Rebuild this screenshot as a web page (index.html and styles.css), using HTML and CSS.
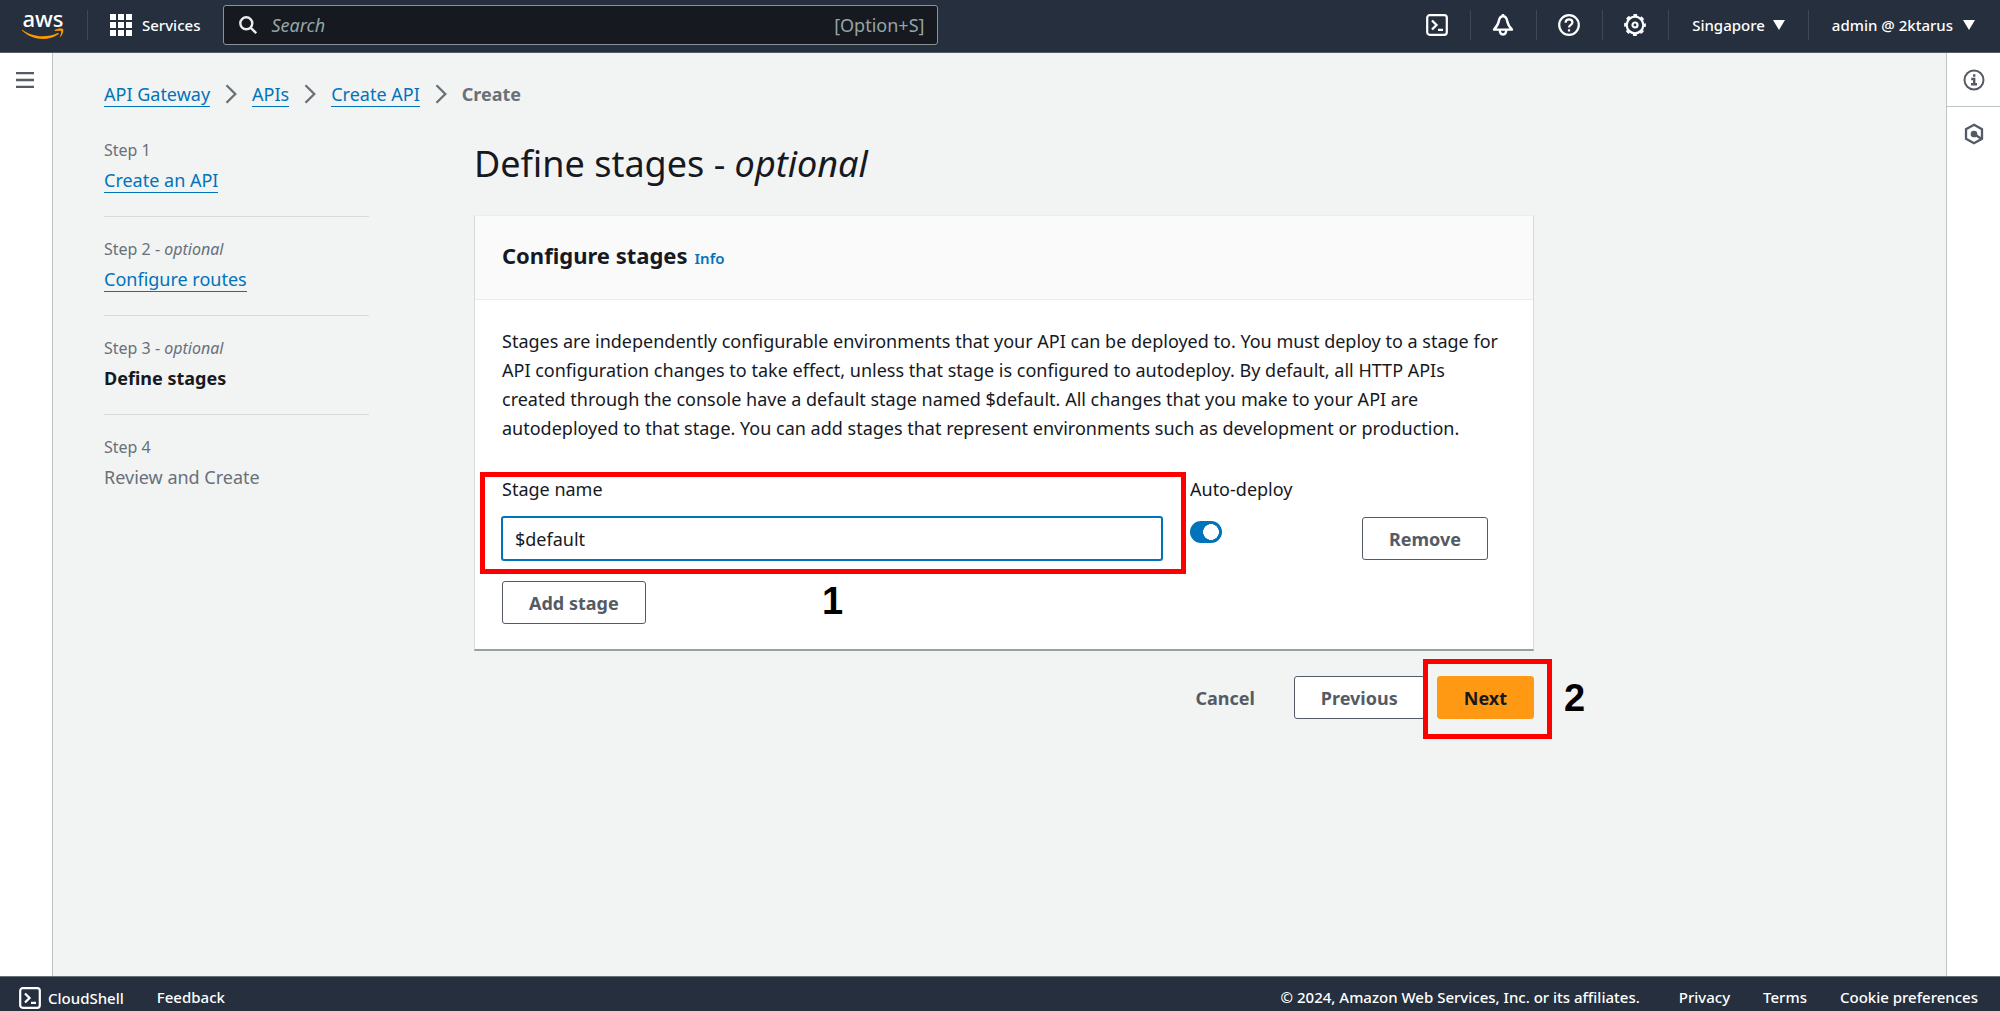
FILE: index.html
```html
<!DOCTYPE html>
<html lang="en">
<head>
<meta charset="utf-8">
<meta name="viewport" content="width=device-width, initial-scale=1">
<title>API Gateway - Define stages</title>
<link rel="stylesheet" href="styles.css">
</head>
<body>
<svg class="sprite" aria-hidden="true">
  <symbol id="shell" viewBox="0 0 22 22"><rect x="1.2" y="1.2" width="19.6" height="19.6" rx="2.5" fill="none" stroke="currentColor" stroke-width="2.2"/><path d="M6 6.5l4.5 4.5L6 15.5M12 15.8h5" fill="none" stroke="currentColor" stroke-width="2.3"/></symbol>
  <symbol id="chevron" viewBox="0 0 12 20"><path d="M1.5 1.2L10.3 10l-8.8 8.8" fill="none" stroke="currentColor" stroke-width="2.3"/></symbol>
</svg>
<header class="topbar">
  <a class="logo" href="#" aria-label="AWS home">
    <span class="logo-text">aws</span>
    <svg class="logo-smile" viewBox="0 0 42 12" aria-hidden="true"><path d="M.3 1.8C6 6 13 8.3 20.500 8.3c5.200 0 10.900-1.200 15.200-3.300.9-.4 1.600.6.7 1.300C32.500 9.300 26.500 11 20.800 11 13 11 5.800 8 .2 2.800c-.5-.5-.3-1.200.1-1zM32.500 2.400C35 .6 39 .2 41 1c1 .8-.2 5.800-2.600 8-.5.400-.8.200-.6-.3.700-1.600 1.900-4.700 1.300-5.500-.5-.7-3.900-.4-5.900-.200-.6.1-.7-.300-.700-.6z" fill="#ff9900"/></svg>
  </a>
  <button class="services" type="button">
    <svg width="22" height="22" viewBox="0 0 22 22" fill="currentColor" aria-hidden="true"><path d="M0 0h6v6H0zM8 0h6v6H8zM16 0h6v6h-6zM0 8h6v6H0zM8 8h6v6H8zM16 8h6v6h-6zM0 16h6v6H0zM8 16h6v6H8zM16 16h6v6h-6z"/></svg>
    Services
  </button>
  <label class="search">
    <svg width="18" height="18" viewBox="0 0 18 18" fill="none" stroke="#eaeded" stroke-width="2.4" aria-hidden="true"><circle cx="7.300" cy="7.300" r="6"/><path d="M11.600 11.600l5.600 5.600"/></svg>
    <input type="search" placeholder="Search" aria-label="Search">
    <span class="shortcut">[Option+S]</span>
  </label>
  <nav class="tools" aria-label="Account">
    <button type="button" class="tool" aria-label="CloudShell"><svg class="icon"><use href="#shell"/></svg></button>
    <button type="button" class="tool" aria-label="Notifications"><svg class="icon" viewBox="0 0 22 22" fill="none" stroke="currentColor" stroke-width="2.400" stroke-linejoin="round"><path d="M11 2.200C8.600 2.200 7.300 4.200 6.900 6.800 6.300 10.600 4.900 12.500 2 15.600h18c-2.900-3.100-4.300-5-4.900-8.800-.4-2.600-1.700-4.600-4.100-4.600zM11 0v2M7.800 16c0 2.700 1.200 4.500 3.200 4.500s3.200-1.800 3.200-4.500"/></svg></button>
    <button type="button" class="tool" aria-label="Help"><svg class="icon" viewBox="0 0 22 22" fill="none" stroke="currentColor" stroke-width="2.200"><circle cx="11" cy="11" r="9.800"/><path d="M7.600 8.700C7.700 6.600 9 5.400 11 5.400s3.400 1.200 3.400 3c0 2.400-3.400 2.500-3.400 5.100M11 15.300v2.300"/></svg></button>
    <button type="button" class="tool" aria-label="Settings"><svg class="icon" viewBox="0 0 22 22" fill="none" stroke="currentColor"><circle cx="11" cy="11" r="8.300" stroke-width="2.200"/><circle cx="11" cy="11" r="9.900" stroke-width="2" stroke-dasharray="3.900 3.875" stroke-dashoffset="1.950"/><circle cx="11" cy="11" r="2.500" stroke-width="2.200"/></svg></button>
    <button type="button" class="tool menu">Singapore <span class="caret"></span></button>
    <button type="button" class="tool menu account">admin @ 2ktarus <span class="caret"></span></button>
  </nav>
</header>

<div class="shell">
  <aside class="rail rail-left">
    <button type="button" aria-label="Open navigation"><svg width="18" height="16" viewBox="0 0 18 16" aria-hidden="true"><path d="M0 1.200h18M0 8h18M0 14.800h18" stroke="currentColor" stroke-width="2.300"/></svg></button>
  </aside>

  <main class="content">
    <nav class="crumbs" aria-label="Breadcrumbs">
      <a href="#">API Gateway</a><svg><use href="#chevron"/></svg>
      <a href="#">APIs</a><svg><use href="#chevron"/></svg>
      <a href="#">Create API</a><svg><use href="#chevron"/></svg>
      <b>Create</b>
    </nav>
    <div class="wizard">
      <ol class="steps">
        <li><small>Step 1</small><a href="#">Create an API</a></li>
        <li><small>Step 2 - <i>optional</i></small><a href="#">Configure routes</a></li>
        <li><small>Step 3 - <i>optional</i></small><b>Define stages</b></li>
        <li><small>Step 4</small><span>Review and Create</span></li>
      </ol>
      <form class="stage-form">
        <h1>Define stages - <i>optional</i></h1>
        <section class="card">
          <div class="card-head"><h2>Configure stages</h2><a href="#">Info</a></div>
          <div class="card-body">
            <p>Stages are independently configurable environments that your API can be deployed to. You must deploy to a stage for<br>API configuration changes to take effect, unless that stage is configured to autodeploy. By default, all HTTP APIs<br>created through the console have a default stage named $default. All changes that you make to your API are<br>autodeployed to that stage. You can add stages that represent environments such as development or production.</p>
            <div class="stage-row">
              <div class="field marked">
                <label for="stage">Stage name</label>
                <input id="stage" class="text-input" type="text" value="$default">
                <span class="mark-number below">1</span>
              </div>
              <div class="field">
                <label for="auto">Auto-deploy</label>
                <input id="auto" class="toggle" type="checkbox" role="switch" checked>
              </div>
              <button type="button" class="btn remove">Remove</button>
            </div>
            <button type="button" class="btn">Add stage</button>
          </div>
        </section>
        <div class="actions">
          <button type="button" class="btn plain">Cancel</button>
          <button type="button" class="btn">Previous</button>
          <div class="next marked">
            <button type="button" class="btn primary">Next</button>
            <span class="mark-number beside">2</span>
          </div>
        </div>
      </form>
    </div>
  </main>

  <aside class="rail rail-right">
    <button type="button" aria-label="Info"><svg class="icon" viewBox="0 0 22 22" fill="none" stroke="currentColor" stroke-width="2"><circle cx="11" cy="11" r="9.500"/><path d="M8.200 10h3v5M8 15.200h6M10 6.500h2.400" stroke-width="2.400"/></svg></button>
    <button type="button" aria-label="Diagnostics"><svg class="icon" viewBox="0 0 22 22" fill="none" stroke="currentColor" stroke-width="2.300"><path d="M11 1.800l8 4.400v9.600l-8 4.400-8-4.400V6.200z"/><path d="M11 11l7 4.500"/><circle cx="11" cy="11" r="2.200" fill="currentColor"/></svg></button>
  </aside>
</div>

<footer class="footer">
  <a class="cloudshell" href="#"><svg class="icon"><use href="#shell"/></svg>CloudShell</a>
  <a href="#">Feedback</a>
  <span class="copyright">© 2024, Amazon Web Services, Inc. or its affiliates.</span>
  <a href="#">Privacy</a>
  <a href="#">Terms</a>
  <a href="#">Cookie preferences</a>
</footer>
</body>
</html>
```
FILE: styles.css
```css
* { box-sizing: border-box; }

body {
  margin: 0;
  min-height: 100vh;
  display: flex;
  flex-direction: column;
  background: #f2f3f3;
  color: #16191f;
  font: 18px/29px "Noto Sans", "Open Sans", sans-serif;
}

button, input { font: inherit; color: inherit; }
button { cursor: pointer; }
a { color: #0073bb; text-decoration: none; }
.sprite { display: none; }
.icon { display: block; width: 22px; height: 22px; }

/* Top bar */
.topbar {
  display: flex;
  align-items: center;
  height: 53px;
  padding-bottom: 3px;
  background: #252f3e;
  border-bottom: 1px solid #545b64;
  color: #fff;
  font-size: 15px;
  font-weight: 500;
  line-height: 20px;
}
.logo { width: 87px; padding-left: 22px; color: #fff; }
.logo-text { display: block; width: 42px; text-align: center; font: 500 22px/17px "Noto Sans", sans-serif; }
.logo-smile { display: block; width: 42px; height: 12px; margin-top: 1px; }
.services {
  display: flex;
  align-items: center;
  gap: 10px;
  height: 30px;
  padding: 0 23px 0 22px;
  border: 0;
  border-left: 1px solid #414750;
  background: none;
}
.search {
  display: flex;
  align-items: center;
  flex: 0 1 715px;
  height: 40px;
  padding: 0 13px 0 15px;
  border: 1px solid #879596;
  border-radius: 3px;
  background: #16191f;
  font-size: 18px;
  font-weight: 400;
}
.search input {
  flex: 1;
  min-width: 0;
  padding: 0 14px;
  border: 0;
  outline: 0;
  background: none;
}
.search input::placeholder { color: #95a5a6; font-style: italic; opacity: 1; }
.shortcut { color: #95a5a6; }
.tools { display: flex; margin-left: auto; }
.tool {
  display: flex;
  align-items: center;
  gap: 8px;
  height: 30px;
  padding: 0 22px 0 21px;
  border: 0;
  border-left: 1px solid #414750;
  background: none;
}
.tool:first-child { border-left: 0; }
.menu { padding: 0 23px; }
.account { gap: 10px; padding-right: 25px; }
.caret { border: 6px solid transparent; border-top: 10px solid #fff; border-bottom: 0; }

/* Page frame */
.shell { flex: 1; display: flex; }
.rail { flex: none; background: #fff; color: #545b64; }
.rail button { display: flex; align-items: center; justify-content: center; width: 100%; height: 53px; padding: 0; border: 0; background: none; }
.rail-left { width: 53px; border-right: 1px solid #bcc4c8; }
.rail-left button { padding-right: 2px; }
.rail-right { width: 54px; border-left: 1px solid #bcc4c8; }
.rail-right button:first-child { height: 54px; border-bottom: 1px solid #bcc4c8; }
.content { flex: 1; min-width: 0; padding: 26px 51px; }

.crumbs { display: flex; align-items: center; height: 30px; line-height: 24px; }
.crumbs a { border-bottom: 1px solid #0073bb; }
.crumbs b { color: #687078; }
.crumbs svg { width: 12px; height: 20px; margin: 0 15px; color: #687078; }

.wizard {
  display: grid;
  grid-template-columns: 1fr 4fr;
  gap: 105px;
  max-width: 1430px;
}

/* Step list */
.steps { margin: 0; padding: 29px 0 0; list-style: none; color: #687078; }
.steps li { height: 79px; border-bottom: 1px solid #d5dbdb; margin-bottom: 20px; }
.steps li:last-child { border: 0; }
.steps small { display: block; font-size: 16px; line-height: 24px; margin-bottom: 4px; }
.steps a, .steps b, .steps span { display: inline-block; line-height: 24px; }
.steps a { border-bottom: 1px solid #0073bb; }
.steps b { color: #16191f; }

/* Stage form */
h1 { margin: 32px 0 28px; font-size: 36px; line-height: 46px; font-weight: 400; }
.card {
  background: #fff;
  border: 1px solid #d5dbdb;
  border-top-color: #eaeded;
  border-bottom: 2px solid #95a0a3;
}
.card-head {
  display: flex;
  align-items: baseline;
  gap: 7px;
  height: 84px;
  padding: 23px 27px;
  border-bottom: 1px solid #eaeded;
  background: #fafafa;
}
.card-head a { font-size: 15px; font-weight: 600; }
h2 { margin: 0; font-size: 22px; line-height: 32px; }
.card-body { padding: 27px 27px 25px; }
p { margin: 0 0 32px; white-space: nowrap; }
.stage-row { display: grid; grid-template-columns: 660fr 144fr 144fr; gap: 28px; margin-bottom: 21px; }
.field label { display: block; margin-bottom: 13px; }
.marked { position: relative; }
.marked::before { content: ""; position: absolute; border: 5px solid #f00; pointer-events: none; }
.field.marked::before { inset: -3px -24px -14px -22px; }
.next.marked::before { inset: -17px -18px -20px -14px; }
.mark-number { position: absolute; color: #000; font: bold 38px/44px "Liberation Sans", Arial, sans-serif; }
.below { top: 104px; left: 320px; }
.beside { top: 0; left: calc(100% + 30px); }

.text-input {
  display: block;
  width: 100%;
  height: 43px;
  padding: 0 12px;
  border: 1px solid #0073bb;
  border-radius: 2px;
  outline: 0;
  box-shadow: 0 0 0 1px #0073bb;
}
.toggle {
  appearance: none;
  display: block;
  width: 32px;
  height: 22px;
  margin: 17px 0 0;
  border-radius: 11px;
  background: radial-gradient(circle 8px at 21px 11px, #fff 96%, transparent) #0073bb;
}
.btn {
  height: 43px;
  padding: 0 26px;
  border: 1px solid #545b64;
  border-radius: 3px;
  background: #fff;
  color: #545b64;
  font-weight: 700;
  line-height: 24px;
}
.remove { align-self: end; justify-self: start; }
.plain { border-color: transparent; background: none; }
.primary { border-color: #ff9914; background: #ff9914; color: #16191f; }
.actions { display: flex; justify-content: flex-end; gap: 12px; margin-top: 25px; }

/* Footer bar */
.footer {
  display: flex;
  gap: 33px;
  height: 35px;
  padding: 8px 22px 0 19px;
  background: #252f3e;
  border-top: 1px solid #687078;
  color: #fff;
  font-size: 15px;
  font-weight: 500;
  line-height: 24px;
}
.footer a { color: inherit; }
.cloudshell { display: flex; align-items: center; gap: 7px; }
.copyright { margin: 0 6px 0 auto; }
```
